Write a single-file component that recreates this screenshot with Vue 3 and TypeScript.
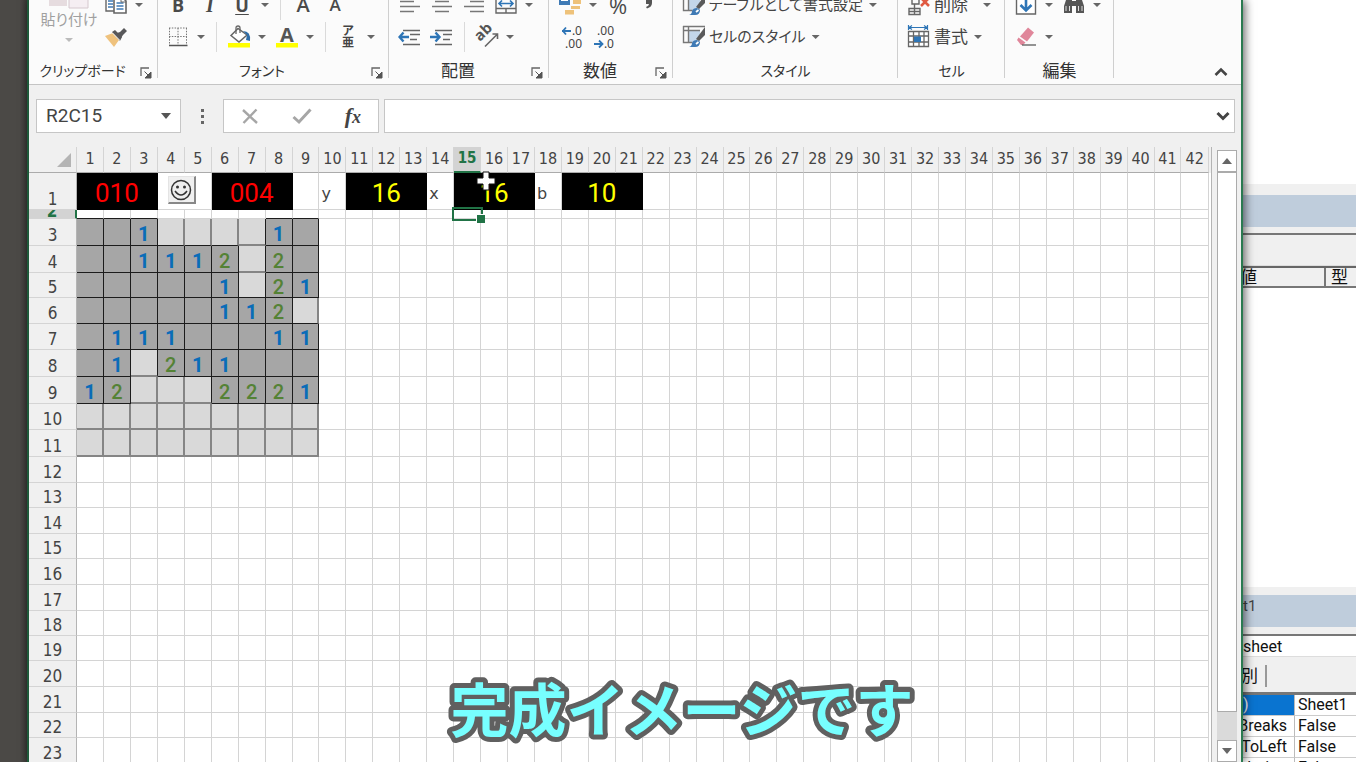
<script setup lang="ts">
interface Block {
  from: number
  span: number
  text: string
  tone: 'red' | 'yellow'
}

const columns = Array.from({ length: 42 }, (_, i) => i + 1)

const blocks: Block[] = [
  { from: 1, span: 3, text: '010', tone: 'red' },
  { from: 6, span: 3, text: '004', tone: 'red' },
  { from: 11, span: 3, text: '16', tone: 'yellow' },
  { from: 15, span: 3, text: '16', tone: 'yellow' },
  { from: 19, span: 3, text: '10', tone: 'yellow' },
]
const labels: Record<number, string> = { 10: 'y', 14: 'x', 18: 'b' }

/* '#' is a covered square, '.' an open empty one */
const field = [
  '..1####1.',
  '..1112#2.',
  '.....1#21',
  '.....112#',
  '.111...11',
  '.1#211...',
  '12###2221',
  '#########',
  '#########',
]

const firstRow = columns
  .filter((c) => !blocks.some((b) => c > b.from && c < b.from + b.span) && c !== 5)
  .map((c) => ({ c, block: blocks.find((b) => b.from === c) }))

const rowHeights = [27, 27, 25, 26, 26, 27, 27, 26, 27, 26, 25, 26, 25, 26, 26, 25, 25, 26, 26, 25, 26]
const rows = rowHeights.map((h, i) => ({ n: i + 3, h, cells: columns.map((c) => cellAt(i, c - 1)) }))

function isOpen(r: number, c: number): boolean {
  const v = field[r]?.[c]
  return v !== undefined && v !== '#'
}

function cellAt(r: number, c: number) {
  const v = field[r]?.[c]
  if (v === undefined) return { text: '', cls: '' }
  const open = v !== '#'
  const right = open || isOpen(r, c + 1) ? 'rb' : 'rg'
  const bottom = open || isOpen(r + 1, c) ? 'bb' : 'bg'
  const num = v === '1' ? 'one' : v === '2' ? 'two' : ''
  return { text: num ? v : '', cls: `${open ? 'open' : 'covered'} ${right} ${bottom} ${num}` }
}

const properties = [
  { name: ')', value: 'Sheet1', on: true },
  { name: 'Breaks', value: 'False', on: false },
  { name: 'ToLeft', value: 'False', on: false },
  { name: 'alculation', value: 'False', on: false },
]
</script>

<template>
  <div class="desktop">
    <main class="excel">
      <div class="ribbon">
        <section class="group clip">
          <div class="cliprow">
            <button class="paste">
              <svg width="40" height="14" viewBox="0 0 40 14"><path d="M0 0h18v11H0z" fill="#e6dcdf" /><path d="M20 0h19v13H20z" fill="#f5eef2" stroke="#d5c8ce" /></svg>
              <span>貼り付け</span>
              <i class="caret pale"></i>
            </button>
            <div class="rows">
              <div class="row">
                <button class="split" aria-label="コピー">
                  <svg class="ic" viewBox="0 0 24 24"><path d="M2 1h9v17H2z" fill="#fff" stroke="#666" stroke-width="1.4" /><path d="M4 8h5M4 11h5M4 14h5" stroke="#3f7ab5" stroke-width="1.3" /><path d="M10 4h8l4 4v12H10z" fill="#fff" stroke="#666" stroke-width="1.6" /><path d="M12.500 10h7M12.500 13h7M12.500 16h7" stroke="#3f7ab5" stroke-width="1.6" /><path d="M17 4v5h5" fill="none" stroke="#666" /></svg>
                  <i class="caret"></i>
                </button>
              </div>
              <div class="row">
                <button class="btn" aria-label="書式のコピー">
                  <svg class="ic" viewBox="0 0 24 24"><path d="M1 11l8-3 6 7-5 7z" fill="#efc27d" /><path d="M8 7l3-2 7 7-2 4z" fill="#58585a" /><path d="M13 8l3-1 4-4 3 3-4 4-2 3z" fill="#58585a" /><path d="M8.500 8l7.500 7.500" stroke="#fff" stroke-width=".9" /></svg>
                </button>
              </div>
            </div>
          </div>
          <div class="label kana"><span>クリップボード</span><button class="launch" aria-label="詳細"><svg viewBox="0 0 12 12"><path d="M1 9V1h8" fill="none" stroke="#666" stroke-width="1.300" /><path d="M4.500 4.500l4 4M11 5v6H5z" stroke="#555" fill="#555" /></svg></button></div>
        </section>

        <section class="group font">
          <div class="row">
            <button class="btn glyph"><b>B</b></button>
            <button class="btn glyph ital"><b>I</b></button>
            <button class="split glyph"><b class="ul">U</b><i class="caret"></i></button>
            <i class="sep"></i>
            <button class="btn glyph big">A</button>
            <button class="btn glyph small">A</button>
          </div>
          <div class="row">
            <button class="split" aria-label="罫線">
              <svg class="ic" viewBox="0 0 24 24"><path d="M3 3h18M3 11.500h18M3.500 3v17M12 3v17M20.500 3v17" fill="none" stroke="#777" stroke-dasharray="1.500 1.300" /><path d="M3 20.500h18.500" stroke="#555" stroke-width="1.500" /></svg>
              <i class="caret"></i>
            </button>
            <i class="sep"></i>
            <button class="split" aria-label="塗りつぶしの色">
              <svg class="ic" viewBox="0 0 24 24"><path d="M4 10.500L11 3.500l9 6.500-8 7z" fill="#fff" stroke="#666" stroke-width="1.500" /><path d="M9 9V3q0-2 2-2t2 2v5" fill="none" stroke="#666" stroke-width="1.300" /><path d="M16 6q8 0 7 10l-4-1 1-5z" fill="#2e6da8" /><path d="M1 18h22v4.500H1z" fill="#ff0" /></svg>
              <i class="caret"></i>
            </button>
            <button class="split" aria-label="フォントの色">
              <svg class="ic" viewBox="0 0 24 24"><text x="12" y="17" text-anchor="middle" font-family="Open Sans" font-weight="700" font-size="20" fill="#555">A</text><path d="M1 18h22v4.500H1z" fill="#ff0" /></svg>
              <i class="caret"></i>
            </button>
            <i class="sep"></i>
            <button class="split"><span class="ruby"><span>ア</span><span>亜</span></span><i class="caret"></i></button>
          </div>
          <div class="label kana"><span>フォント</span><button class="launch" aria-label="詳細"><svg viewBox="0 0 12 12"><path d="M1 9V1h8" fill="none" stroke="#666" stroke-width="1.300" /><path d="M4.500 4.500l4 4M11 5v6H5z" stroke="#555" fill="#555" /></svg></button></div>
        </section>

        <section class="group align">
          <div class="row">
            <button class="btn" aria-label="左揃え"><svg class="ic" viewBox="0 0 24 24"><path d="M2 8.500h14M2 13.500h20M2 18.500h14" stroke="#777" stroke-width="1.400" /></svg></button>
            <button class="btn" aria-label="中央揃え"><svg class="ic" viewBox="0 0 24 24"><path d="M5 8.500h14M2 13.500h20M5 18.500h14" stroke="#777" stroke-width="1.400" /></svg></button>
            <button class="btn" aria-label="右揃え"><svg class="ic" viewBox="0 0 24 24"><path d="M8 8.500h14M2 13.500h20M8 18.500h14" stroke="#777" stroke-width="1.400" /></svg></button>
            <button class="split" aria-label="セルを結合"><svg class="ic" viewBox="0 0 24 24"><path d="M2 2h20v18H2zM2 15.500h20M12 15.500V20" fill="none" stroke="#666" stroke-width="1.400" /><path d="M5 10.500h14M8 7.500l-3 3 3 3M16 7.500l3 3-3 3" fill="none" stroke="#2e75b6" stroke-width="1.600" /></svg><i class="caret"></i></button>
          </div>
          <div class="row">
            <button class="btn" aria-label="インデントを減らす"><svg class="ic" viewBox="0 0 24 24"><path d="M5 5.500h17M12 9.500h10M12 14.500h7M5 19.500h17" stroke="#666" stroke-width="1.400" /><path d="M1 12h10M5.500 7.500L1.500 12l4 4.500" fill="none" stroke="#2e75b6" stroke-width="2.400" /></svg></button>
            <button class="btn" aria-label="インデントを増やす"><svg class="ic" viewBox="0 0 24 24"><path d="M5 5.500h17M13 9.500h9M13 14.500h7M5 19.500h17" stroke="#666" stroke-width="1.400" /><path d="M0 12h10M5.500 7.500l4 4.500-4 4.500" fill="none" stroke="#2e75b6" stroke-width="2.400" /></svg></button>
            <i class="sep"></i>
            <button class="split" aria-label="方向"><svg class="ic" viewBox="0 0 24 24"><text x="5" y="17" transform="rotate(-45 5 17)" font-family="Open Sans" font-weight="700" font-size="15" fill="#555">ab</text><path d="M10 21.500L22 9.500M17.500 9h5v5" fill="none" stroke="#666" stroke-width="1.600" /></svg><i class="caret"></i></button>
          </div>
          <div class="label"><span>配置</span><button class="launch" aria-label="詳細"><svg viewBox="0 0 12 12"><path d="M1 9V1h8" fill="none" stroke="#666" stroke-width="1.300" /><path d="M4.500 4.500l4 4M11 5v6H5z" stroke="#555" fill="#555" /></svg></button></div>
        </section>

        <section class="group number">
          <div class="row">
            <button class="split" aria-label="通貨"><svg class="ic" viewBox="0 0 24 24"><path d="M1 0h11v12H1z" fill="#3f7ab5" /><path d="M3 3h7v5H3z" fill="#fff" /><path d="M15 7h8v4h-8zM13 13h9v3h-9zM7 17h9v4.500H7z" fill="#eec27a" /></svg><i class="caret"></i></button>
            <button class="btn glyph pct">%</button>
            <button class="btn" aria-label="桁区切り"><svg class="ic" viewBox="0 0 24 24"><path d="M8 7h6v3q0 4-5 5.500l-1-1.500q3-1 3-3H8z" fill="#555" /></svg></button>
          </div>
          <div class="row">
            <button class="btn dec" aria-label="小数点以下の表示桁数を増やす"><span><svg width="10" height="10" viewBox="0 0 10 10"><path d="M0 5h9M4 1.500L1 5l3 3.500" fill="none" stroke="#2e75b6" stroke-width="1.800" /></svg>.0</span><span>.00</span></button>
            <button class="btn dec" aria-label="小数点以下の表示桁数を減らす"><span>.00</span><span><svg width="10" height="10" viewBox="0 0 10 10"><path d="M0 5h9M5 1.500L8.500 5 5 8.500" fill="none" stroke="#2e75b6" stroke-width="1.800" /></svg>.0</span></button>
          </div>
          <div class="label"><span>数値</span><button class="launch" aria-label="詳細"><svg viewBox="0 0 12 12"><path d="M1 9V1h8" fill="none" stroke="#666" stroke-width="1.300" /><path d="M4.500 4.500l4 4M11 5v6H5z" stroke="#555" fill="#555" /></svg></button></div>
        </section>

        <section class="group styles">
          <div v-for="t in ['テーブルとして書式設定', 'セルのスタイル']" :key="t" class="row">
            <button class="text palt">
              <svg class="ic" viewBox="0 0 24 24"><path d="M7 5h11v12H7z" fill="#c3d6ea" /><path d="M1 1.500h22M1.500 1v16.500h9M1 5.500h17M6.500 1v16" fill="none" stroke="#777" stroke-width="1.400" /><path d="M23 2v8l-6 6-3-2z" fill="#5a5a5a" /><path d="M7 22q3-1 3-4 1-3 5-3l3 2q0 5-5 5z" fill="#3f7ab5" /><path d="M14 19l2.500-2" stroke="#fff" stroke-width="1.800" /></svg>
              {{ t }}<i class="caret"></i>
            </button>
          </div>
          <div class="label kana"><span>スタイル</span></div>
        </section>

        <section class="group cells">
          <div class="row">
            <button class="text wide"><svg class="ic" viewBox="0 0 24 24"><path d="M5 5h7v6H5zM2 15.500h11v6H2zM7.500 11v10M2 18.500h11" fill="none" stroke="#666" stroke-width="1.400" /><path d="M14 5l8 8M22 5l-8 8" stroke="#e05a42" stroke-width="2.600" /></svg>削除<i class="caret"></i></button>
          </div>
          <div class="row">
            <button class="text"><svg class="ic" viewBox="0 0 24 24"><path d="M1.500 6.500h20v15h-20zM1.500 11h20M1.500 17h20M6.500 6.500v15M17 6.500v15M12 6.500v15" fill="#fff" stroke="#666" stroke-width="1.300" /><path d="M7 11.500h7v5.500H7z" fill="#2e75b6" /><path d="M2 2.500h18M5 .5l-3 2 3 2M17 .5l3 2-3 2M1.500 0v5M20.500 0v5" fill="none" stroke="#2e75b6" stroke-width="1.200" /></svg>書式<i class="caret"></i></button>
          </div>
          <div class="label kana"><span>セル</span></div>
        </section>

        <section class="group edit">
          <div class="row">
            <button class="split" aria-label="フィル"><svg class="ic" viewBox="0 0 24 24"><path d="M2.500 2h19v19h-19z" fill="#fff" stroke="#666" stroke-width="1.400" /><path d="M12 4v14M6.500 12l5.500 5.500 5.500-5.500" fill="none" stroke="#2e75b6" stroke-width="2.600" /></svg><i class="caret"></i></button>
            <button class="split" aria-label="検索と選択"><svg class="ic" viewBox="0 0 24 24"><path d="M5 4h5v4h4V4h5l3 9v7h-8v-7h-4v7H2v-7z" fill="#555" /><path d="M4 13v5M7.500 13v5M16.500 13v5M20 13v5" stroke="#ddd" /></svg><i class="caret"></i></button>
          </div>
          <div class="row">
            <button class="split" aria-label="クリア"><svg class="ic" viewBox="0 0 24 24"><path d="M14 2.500l6 5-7 9-7-5z" fill="#e0869a" /><path d="M4.500 12.500l7 5-2.500 2.500H7L3 15z" fill="#e0869a" /><path d="M8 20h14" stroke="#666" stroke-width="1.400" /></svg><i class="caret"></i></button>
          </div>
          <div class="label"><span>編集</span></div>
        </section>

        <button class="collapse" aria-label="リボンを折りたたむ"><svg width="14" height="10" viewBox="0 0 14 10"><path d="M1.500 8L7 2.500 12.500 8" fill="none" stroke="#444" stroke-width="2.600" /></svg></button>
      </div>

      <div class="formula">
        <div class="namebox"><input aria-label="名前ボックス" value="R2C15" /><button aria-label="名前の一覧"><i class="caret dark"></i></button></div>
        <div class="dots"><i></i><i></i><i></i></div>
        <div class="fx">
          <button aria-label="キャンセル"><svg width="18" height="18" viewBox="0 0 18 18"><path d="M2 3l14 13M15.500 2.500L2.500 16" stroke="#a6a6a6" stroke-width="2.400" /></svg></button>
          <button aria-label="入力"><svg width="20" height="18" viewBox="0 0 20 18"><path d="M1.500 10l5.500 5L18.500 2.500" fill="none" stroke="#a6a6a6" stroke-width="3" /></svg></button>
          <button class="fxi"><b>f</b><small>x</small></button>
        </div>
        <div class="entry"><input aria-label="数式バー" value="" /><button aria-label="数式バーの展開"><svg width="14" height="10" viewBox="0 0 14 10"><path d="M1.500 2L7 7.500 12.500 2" fill="none" stroke="#444" stroke-width="3" /></svg></button></div>
      </div>

      <div class="sheet">
        <div class="gridwrap">
          <table class="grid">
            <colgroup><col class="hcol" /><col v-for="c in columns" :key="c" /></colgroup>
            <thead>
              <tr>
                <th class="corner"><svg width="14" height="14" viewBox="0 0 14 14"><path d="M14 0v14H0z" fill="#b4b4b4" /></svg></th>
                <th v-for="c in columns" :key="c" :class="{ sel: c === 15 }">{{ c }}</th>
              </tr>
            </thead>
            <tbody>
              <tr class="r1">
                <th>1</th>
                <td v-for="f in firstRow" :key="f.c" :colspan="f.block ? f.block.span : f.c === 4 ? 2 : 1" :class="f.block ? ['led', f.block.tone] : f.c === 4 ? 'facecell' : 'lab'">
                  <template v-if="f.block">{{ f.block.text }}</template>
                  <button v-else-if="f.c === 4" class="face" aria-label="リセット">
                    <svg width="22" height="22" viewBox="0 0 22 22"><circle cx="11" cy="11" r="9.500" fill="#eee" stroke="#333" stroke-width="1.500" /><circle cx="7.500" cy="8" r="1.500" fill="#333" /><circle cx="14.500" cy="8" r="1.500" fill="#333" /><path d="M5 12q6 8 12 0" fill="none" stroke="#333" stroke-width="1.500" /></svg>
                  </button>
                  <template v-else>{{ labels[f.c] ?? '' }}</template>
                  <svg v-if="f.c === 15" class="cursor" width="20" height="20" viewBox="0 0 20 20"><path d="M7 1h6v6h6v6h-6v6H7v-6H1V7h6z" fill="#fff" stroke="#111" /></svg>
                </td>
              </tr>
              <tr class="r2">
                <th><div>2</div></th>
                <td v-for="c in columns" :key="c" :class="{ pick: c === 15, top: isOpen(0, c - 1) }"><span v-if="c === 15" class="pickbox"></span></td>
              </tr>
              <tr v-for="r in rows" :key="r.n" :style="{ height: r.h + 'px' }">
                <th>{{ r.n }}</th>
                <td v-for="(cell, i) in r.cells" :key="i" :class="cell.cls">{{ cell.text }}</td>
              </tr>
            </tbody>
          </table>
        </div>
        <div class="scroll">
          <button aria-label="上へ"><i class="tri up"></i></button>
          <div class="thumb"></div>
          <button class="down" aria-label="下へ"><i class="tri"></i></button>
        </div>
      </div>
    </main>

    <aside class="editor">
      <div class="titlebar first"></div>
      <div class="gap"></div>
      <div class="watchhead"><span class="a">値</span><span class="b">型</span></div>
      <div class="blank"></div>
      <div class="titlebar second">t1</div>
      <div class="object">sheet</div>
      <div class="tabs"><span>別</span></div>
      <table class="props">
        <tbody>
          <tr v-for="(p, i) in properties" :key="i">
            <th :class="{ on: p.on }"><div>{{ p.name }}</div></th>
            <td>{{ p.value }}</td>
          </tr>
        </tbody>
      </table>
    </aside>

    <svg class="caption"><text x="50%" y="58" text-anchor="middle">完成イメージです</text></svg>
  </div>
</template>

<style>
html,
body {
  margin: 0;
  height: 100%;
  overflow: hidden;
}
</style>

<style scoped>
* {
  box-sizing: border-box;
}
.desktop {
  position: relative;
  display: flex;
  height: 100vh;
  overflow: hidden;
  padding-left: 27px;
  background: linear-gradient(90deg, #4b4946 0, #4b4946 20px, #3a3936 27px);
  font-family: Roboto, 'Noto Sans CJK JP', sans-serif;
  color: #444;
}
button {
  padding: 0;
  border: 0;
  background: none;
  font: inherit;
  color: inherit;
}
.excel {
  position: relative;
  z-index: 1;
  flex: 1;
  min-width: 0;
  display: flex;
  flex-direction: column;
  border-left: 2px solid #1e5a3a;
  border-right: 2px solid #2a7a50;
  background: #f0f0f0;
  box-shadow: 2px 0 9px rgba(0, 0, 0, 0.6);
}

/* ribbon */
.ribbon {
  display: flex;
  flex: none;
  height: 85px;
  overflow: hidden;
  background: #fbfbfb;
  border-bottom: 1px solid #c4c4c4;
}
.group {
  position: relative;
  display: flex;
  flex-direction: column;
  justify-content: flex-end;
  flex: none;
  height: 84px;
  padding-left: 9px;
}
.group::after {
  content: '';
  position: absolute;
  right: 0;
  top: 0;
  width: 1px;
  height: 78px;
  background: #cfcfcf;
}
.clip { width: 129px; }
.font { width: 231px; padding-left: 8px; }
.align { width: 160px; }
.number { width: 124px; }
.styles { width: 225px; }
.cells { width: 107px; }
.edit { width: 109px; }
.row {
  display: flex;
  align-items: center;
  flex: none;
  height: 32px;
}
.ic {
  width: 24px;
  height: 24px;
  flex: none;
  display: block;
}
.btn {
  width: 24px;
  height: 24px;
  flex: none;
  margin-right: 8px;
}
.split {
  width: 40px;
  height: 24px;
  flex: none;
  display: flex;
  align-items: center;
  justify-content: space-between;
  margin-right: 8px;
}
.caret {
  flex: none;
  width: 8px;
  height: 4px;
  margin: 0 1px;
  background: #666;
  clip-path: polygon(0 0, 100% 0, 50% 100%);
}
.caret.pale { background: #bbb; }
.caret.dark { width: 10px; height: 6px; background: #555; }
.sep {
  width: 1px;
  height: 30px;
  margin: 0 10px 0 2px;
  background: #dadada;
  flex: none;
}
.glyph {
  font-family: 'Open Sans', sans-serif;
  font-size: 18px;
  line-height: 24px;
  color: #4a4a4a;
}
.glyph b { width: 24px; text-align: center; }
.ital { font-family: 'Liberation Serif', serif; font-style: italic; font-size: 20px; }
.ul { text-decoration: underline; text-underline-offset: 2px; }
.big { font-size: 20px; font-weight: 600; }
.small { font-size: 17px; font-weight: 600; }
.pct { font-size: 22px; }
.ruby {
  width: 24px;
  display: flex;
  flex-direction: column;
  align-items: center;
  font-size: 12px;
  line-height: 12px;
  font-weight: 700;
}
.dec {
  height: 26px;
  font-size: 12px;
  line-height: 13px;
  font-family: 'Noto Sans', sans-serif;
}
.dec span {
  display: flex;
  align-items: center;
  justify-content: flex-end;
  height: 13px;
  white-space: nowrap;
}
.text {
  display: flex;
  align-items: center;
  gap: 3px;
  font-size: 17px;
  line-height: 24px;
  white-space: nowrap;
}
.text .caret { margin-left: 3px; }
.text.wide .caret { margin-left: 12px; }
.palt { font-size: 15px; font-feature-settings: 'palt'; }
.label {
  flex: none;
  display: flex;
  align-items: center;
  justify-content: center;
  height: 26px;
  margin-top: 5px;
  margin-left: -9px;
  font-size: 17px;
  line-height: 26px;
  color: #333;
}
.label span { flex: 1; text-align: center; white-space: nowrap; }
.kana { font-size: 14px; font-feature-settings: 'palt'; }
.launch { width: 12px; height: 12px; margin: 4px 6px 0 4px; }
.launch svg { display: block; width: 12px; height: 12px; }
.cliprow { display: flex; align-items: flex-end; }
.paste {
  width: 62px;
  margin-right: 4px;
  display: flex;
  flex-direction: column;
  align-items: center;
  padding-bottom: 11px;
  font-size: 15px;
  line-height: 22px;
  color: #a0a0a0;
  font-feature-settings: 'palt';
}
.paste .caret { margin-top: 7px; }
.collapse {
  margin: 0 13px 7px auto;
  align-self: flex-end;
}
.collapse svg { display: block; }

/* formula bar */
.formula {
  display: flex;
  align-items: center;
  flex: none;
  height: 62px;
  padding: 0 6px 0 7px;
}
.namebox,
.fx,
.entry {
  display: flex;
  align-items: center;
  height: 34px;
  background: #fff;
  border: 1px solid #c6c6c6;
}
.formula input {
  flex: 1;
  min-width: 0;
  border: 0;
  outline: 0;
  padding: 0 0 0 9px;
  background: none;
  font: 19px/24px Roboto, sans-serif;
  color: #444;
}
.namebox { width: 145px; flex: none; }
.namebox button { margin-right: 9px; }
.namebox .caret { display: block; margin: 0; }
.dots {
  width: 42px;
  flex: none;
  display: flex;
  flex-direction: column;
  align-items: center;
  gap: 3px;
}
.dots i { width: 3px; height: 3px; background: #666; }
.fx { width: 156px; flex: none; justify-content: space-between; padding: 0 17px; }
.fx svg { display: block; }
.fxi { font-family: 'Liberation Serif', serif; font-style: italic; font-size: 22px; line-height: 24px; }
.fxi small { font-size: 18px; font-weight: 700; }
.entry { flex: 1; margin-left: 5px; }
.entry button { margin-right: 4px; }
.entry svg { display: block; }

/* worksheet */
.sheet { display: flex; flex: 1; min-height: 0; }
.gridwrap {
  flex: 1;
  min-width: 0;
  overflow: hidden;
  padding-right: 2px;
  background: linear-gradient(#f0f0f0 0, #f0f0f0 26px, #fff 26px);
  border-right: 1px solid #b4b4b4;
}
.grid {
  table-layout: fixed;
  width: 100%;
  border-collapse: separate;
  border-spacing: 0;
}
.hcol { width: 48px; }
.grid th,
.grid td {
  padding: 0;
  border: 0 solid #d4d4d4;
  border-width: 0 1px 1px 0;
  line-height: 20px;
}
.grid th {
  background: #f0f0f0;
  font: 17px/20px 'DejaVu Sans Condensed', 'DejaVu Sans', sans-serif;
  color: #444;
  overflow: hidden;
  vertical-align: bottom;
}
.grid thead th {
  height: 26px;
  padding-bottom: 2px;
  vertical-align: middle;
  font-size: 16px;
  line-height: 20px;
  border-bottom-color: #ababab;
}
.grid thead th.sel {
  background: #d3d3d3;
  color: #217346;
  font-weight: 700;
  font-size: 15px;
  border-bottom: 2px solid #217346;
}
.grid tbody th { border-right-color: #b4b4b4; }
.corner svg { display: block; margin: 3px 5px 0 auto; }
.grid td { text-align: center; font-size: 19px; font-weight: 700; }
.grid .r1 { height: 37px; }
.grid .r1 td { position: relative; }
.grid td.led {
  background: #000;
  border-color: #000;
  font-weight: 400;
  font-size: 26px;
  line-height: 32px;
  padding-top: 3px;
}
.grid td.red { color: #f00; }
.grid td.yellow { color: #ff0; }
.grid td.lab {
  text-align: left;
  padding-left: 2px;
  font: 16px/20px 'DejaVu Sans', sans-serif;
  padding-top: 6px;
}
.grid .r1 td.facecell { vertical-align: top; }
.face {
  display: flex;
  align-items: center;
  justify-content: center;
  width: 28px;
  height: 28px;
  margin: 3px 0 0 10px;
  background: #f0f0f0;
  border: 1px solid #e4e4e4;
  border-right: 2px solid #888;
  border-bottom: 2px solid #888;
}
.cursor { position: absolute; left: 22px; top: -2px; }
.grid .r2 { height: 9px; }
.grid .r2 th,
.grid .r2 td { height: 9px; line-height: 0; font-size: 0; }
.grid .r2 th { background: #d3d3d3; border-right: 2px solid #217346; }
.grid .r2 th div {
  height: 8px;
  overflow: hidden;
  font: bold 17px/2px 'DejaVu Sans Condensed', sans-serif;
  color: #217346;
}
.grid .r2 td.top { border-bottom-color: #1c1c1c; }
.pick { position: relative; }
.pickbox {
  position: absolute;
  left: -2px;
  top: -3px;
  right: -3px;
  bottom: -3px;
  border: 2px solid #217346;
}
.pickbox::after {
  content: '';
  position: absolute;
  right: -4px;
  bottom: -4px;
  width: 8px;
  height: 8px;
  background: #217346;
  border: solid #fff;
  border-width: 1px 0 0 1px;
}
.grid td.open { background: #a6a6a6; }
.grid td.covered { background: #d9d9d9; }
.grid td.rb { border-right: 1px solid #1c1c1c; }
.grid td.bb { border-bottom: 1px solid #1c1c1c; }
.grid td.rg { border-right: 2px solid #858585; }
.grid td.bg { border-bottom: 2px solid #858585; }
.grid td.one,
.grid td.two { padding-top: 3px; font-size: 20px; }
.grid td.one { color: #0a6cb8; }
.grid td.two { color: #548235; font-weight: 500; }

.scroll {
  flex: none;
  width: 25px;
  margin: 3px 4px 0 0;
  padding-left: 5px;
  display: flex;
  flex-direction: column;
}
.scroll button {
  flex: none;
  height: 22px;
  background: #fff;
  border: 1px solid #ababab;
  display: flex;
  align-items: center;
  justify-content: center;
}
.tri { width: 10px; height: 6px; background: #666; clip-path: polygon(0 0, 100% 0, 50% 100%); }
.tri.up { clip-path: polygon(50% 0, 100% 100%, 0 100%); }
.thumb {
  flex: 1;
  background: #fff;
  border: 1px solid #ababab;
  margin-bottom: 28px;
  box-shadow: 0 28px 0 #dadada;
}
.scroll .down { position: relative; }

/* editor window behind */
.editor {
  flex: none;
  width: 113px;
  display: flex;
  flex-direction: column;
  padding-top: 184px;
  background: #fff;
  font-size: 16px;
  color: #111;
  overflow: hidden;
}
.titlebar {
  flex: none;
  height: 49px;
  border: solid #f0f0f0;
  border-width: 11px 0 6px;
  background: #bfcddc;
}
.gap { flex: none; height: 33px; background: #f0f0f0; border-top: 2px solid #777; border-bottom: 1px solid #ddd; }
.watchhead {
  flex: none;
  display: flex;
  height: 22px;
  background: #f0f0f0;
  border-top: 2px solid #666;
  border-bottom: 2px solid #777;
  font-size: 17px;
  line-height: 18px;
}
.watchhead .a { width: 83px; border-right: 2px solid #777; text-indent: -3px; overflow: hidden; }
.watchhead .b { padding-left: 5px; }
.blank { flex: none; height: 299px; }
.second { height: 47px; border-width: 8px 0 7px; line-height: 22px; font-size: 15px; color: #444; }
.object { flex: none; height: 23px; border-top: 2px solid #777; border-bottom: 1px solid #ddd; line-height: 22px; }
.tabs { flex: none; height: 35px; padding-top: 8px; background: #f0f0f0; }
.tabs span {
  display: inline-block;
  height: 22px;
  width: 24px;
  border-right: 2px solid #999;
  font-size: 17px;
  line-height: 22px;
  text-indent: -2px;
}
.props {
  width: 100%;
  table-layout: fixed;
  border-spacing: 0;
  border-top: 3px solid #777;
}
.props tr { height: 21px; }
.props th,
.props td {
  padding: 0 0 0 3px;
  font-weight: 400;
  line-height: 20px;
  border-bottom: 1px solid #ccc;
  text-align: left;
}
.props th {
  width: 52px;
  padding: 0 7px 0 0;
  border-right: 1px solid #bbb;
}
.props th div { display: flex; justify-content: flex-end; overflow: hidden; }
.props th.on { background: #0a74d0; color: #fff; }
.props th.on div { justify-content: flex-start; }

.caption {
  position: absolute;
  z-index: 2;
  left: 4px;
  bottom: 8px;
  width: 100%;
  height: 80px;
  overflow: visible;
  pointer-events: none;
}
.caption text {
  font: 700 58px 'Noto Sans CJK JP', sans-serif;
  fill: #7ff;
  stroke: #606060;
  stroke-width: 10px;
  stroke-linejoin: round;
  paint-order: stroke;
}
</style>
